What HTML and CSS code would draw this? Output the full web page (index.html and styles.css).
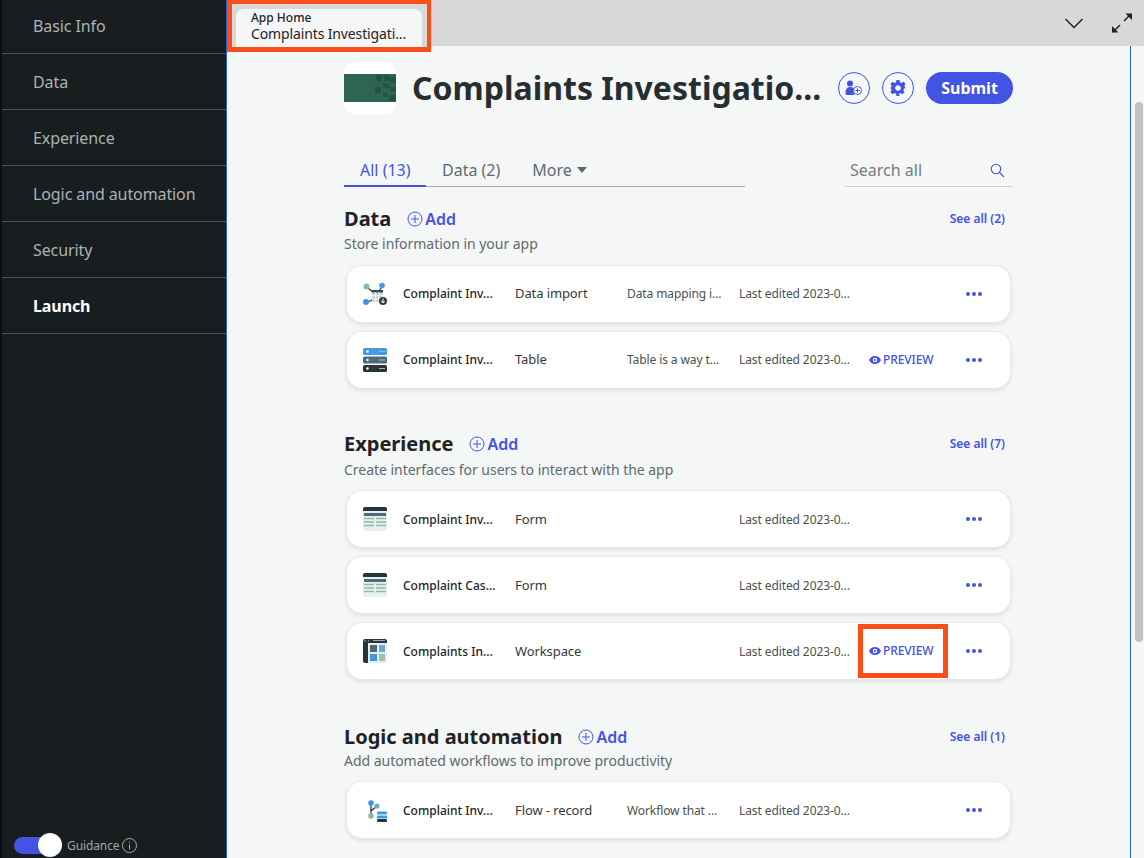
FILE: index.html
```html
<!DOCTYPE html>
<html lang="en">
<head>
<meta charset="utf-8">
<title>App Home</title>
<link rel="stylesheet" href="styles.css">
</head>
<body>
<div class="app">
  <nav class="side">
    <ul class="menu">
      <li class="menu-item">Basic Info</li>
      <li class="menu-item">Data</li>
      <li class="menu-item">Experience</li>
      <li class="menu-item">Logic and automation</li>
      <li class="menu-item">Security</li>
      <li class="menu-item active">Launch</li>
    </ul>
    <div class="guidance">
      <span class="toggle"><span class="knob"></span></span>
      <span class="guid-label">Guidance</span>
      <svg class="info" width="15" height="15" viewBox="0 0 15 15"><circle cx="7.500" cy="7.500" r="7" fill="none" stroke="#a9adad"/><path d="M7.500 6.500v5M7.500 3.800v1.300" stroke="#a9adad" fill="none"/></svg>
    </div>
  </nav>
  <div class="main">
    <header class="topbar">
      <div class="tab-mark">
        <div class="tab">
          <div class="tab-title">App Home</div>
          <div class="tab-sub">Complaints Investigati...</div>
        </div>
      </div>
      <div class="top-actions">
        <svg width="20" height="12" viewBox="0 0 20 12"><path d="M1.500 2l8.500 8.500L18.500 2" fill="none" stroke="#1d2326" stroke-width="1.500"/></svg>
        <svg width="22" height="22" viewBox="0 0 22 22"><path d="M13 9l7-7M2 20l7-7" stroke="#1d2326" stroke-width="1.500" fill="none"/><path d="M14.500 1.500h6.500v6.500zM1 14l6.500 6.500H1z" fill="#1d2326"/></svg>
      </div>
    </header>
    <div class="body">
      <main class="content">
        <div class="page-head">
          <div class="logo"><div class="logo-band"><svg width="21" height="28" viewBox="0 0 21 28"><path fill="#1f4f40" opacity=".7" d="M1 1h6v6H1zM9 1h6v6H9zM15 3h6v6h-6zM0 13h6v6H0zM8 9h6v5H8zM15 13h6v5h-6zM8 19h5v4H8zM14 21h7v6h-7z"/></svg></div></div>
          <h1 class="title">Complaints Investigatio...</h1>
          <button class="round-btn"><svg width="18" height="16" viewBox="0 0 18 16"><circle cx="5" cy="3.500" r="3" fill="#4353e5"/><path d="M0.500 14c0-4 1-7 4.500-7s4 2 4.500 3c-1 2-1 3 0 5H1.500z" fill="#4353e5"/><circle cx="12.500" cy="10.500" r="4" fill="#fff" stroke="#4353e5"/><path d="M12.500 8.300v4.400M10.300 10.500h4.400" stroke="#4353e5"/></svg></button>
          <button class="round-btn"><svg width="16" height="16" viewBox="0 0 16 16"><path fill="#4353e5" fill-rule="evenodd" d="M6.500 0h3l.5 2.200 1.500.7 2-1.100 2 2.200-1.100 2 .6 1.500L16 8l-2 .5-.6 1.500 1.100 2-2 2.200-2-1.100-1.500.7L9.500 16h-3l-.5-2.200-1.500-.7-2 1.100-2-2.200 1.100-2L1 8.500 0 8l1-.5.600-1.500-1.100-2 2-2.200 2 1.100 1.500-.7zM8 5.200a2.800 2.800 0 1 0 0 5.600 2.800 2.800 0 0 0 0-5.600z"/></svg></button>
          <button class="submit">Submit</button>
        </div>
        <div class="filters">
          <div class="tabs">
            <span class="ftab on">All (13)</span>
            <span class="ftab">Data (2)</span>
            <span class="ftab">More<span class="caret"></span></span>
          </div>
          <div class="search">
            <span>Search all</span>
            <svg width="15" height="15" viewBox="0 0 15 15"><circle cx="6" cy="6" r="4.700" fill="none" stroke="#4353e5" stroke-width="1.100"/><path d="M9.500 9.500l4.500 4.500" stroke="#4353e5" stroke-width="1.100"/></svg>
          </div>
        </div>

        <section class="sec sec-data">
          <div class="sec-head">
            <h2>Data</h2>
            <a class="add"><svg width="16" height="16" viewBox="0 0 16 16"><circle cx="8" cy="8" r="7" fill="none" stroke="#4353e5"/><path d="M8 4v8M4 8h8" stroke="#4353e5"/></svg>Add</a>
            <a class="see">See all (2)</a>
          </div>
          <p class="sub">Store information in your app</p>
          <div class="card">
            <svg class="ic" width="24" height="24" viewBox="0 0 24 24"><path d="M5 6l6 5M19 5l-4 5M5 20l6-3" stroke="#1f2d33" stroke-width="1.200"/><circle cx="3.500" cy="4.500" r="3" fill="#8eb8a4"/><circle cx="19" cy="3.500" r="2.800" fill="#4a9be0"/><circle cx="3" cy="20" r="3" fill="#3f97e3"/><rect x="9" y="8" width="11" height="12" fill="#ccd3d5"/><rect x="9" y="8" width="11" height="2.500" fill="#3b4a52"/><path d="M9 13.500h11M9 17h11M12.500 10v10M16 10v10" stroke="#fff" stroke-width=".7"/><circle cx="20" cy="19" r="4" fill="#2f3e46"/><path d="M20 16.500v4M18.200 19l1.800 2 1.800-2" stroke="#fff" fill="none"/></svg>
            <span class="name">Complaint Inv...</span><span class="type">Data import</span><span class="desc">Data mapping i...</span><span class="edited">Last edited 2023-0...</span>
            <span class="prev"></span><span class="dots"><i></i><i></i><i></i></span>
          </div>
          <div class="card">
            <svg class="ic" width="24" height="24" viewBox="0 0 24 24"><rect width="24" height="7" y="0" rx="1.500" fill="#459be0"/><rect width="24" height="7" y="8.500" rx="1.500" fill="#52697a"/><rect width="24" height="7" y="17" rx="1.500" fill="#27353b"/><circle cx="4.500" cy="3.500" r="1.200" fill="#fff"/><circle cx="4.500" cy="12" r="1.200" fill="#fff"/><circle cx="4.500" cy="20.500" r="1.200" fill="#fff"/><path d="M16 3.500h6M16 12h6M16 20.500h6" stroke="#9cc4ad"/></svg>
            <span class="name">Complaint Inv...</span><span class="type">Table</span><span class="desc">Table is a way t...</span><span class="edited">Last edited 2023-0...</span>
            <a class="prev"><svg width="12" height="8" viewBox="0 0 12 8"><path fill="#4353e5" fill-rule="evenodd" d="M6 0c2.600 0 4.800 1.600 6 4-1.200 2.400-3.400 4-6 4S1.200 6.400 0 4c1.200-2.400 3.400-4 6-4zm0 1.800a2.200 2.200 0 1 0 0 4.400 2.200 2.200 0 0 0 0-4.400zm0 1.100a1.100 1.100 0 1 1 0 2.200 1.100 1.100 0 0 1 0-2.200z"/></svg>PREVIEW</a><span class="dots"><i></i><i></i><i></i></span>
          </div>
        </section>

        <section class="sec sec-exp">
          <div class="sec-head">
            <h2>Experience</h2>
            <a class="add"><svg width="16" height="16" viewBox="0 0 16 16"><circle cx="8" cy="8" r="7" fill="none" stroke="#4353e5"/><path d="M8 4v8M4 8h8" stroke="#4353e5"/></svg>Add</a>
            <a class="see">See all (7)</a>
          </div>
          <p class="sub">Create interfaces for users to interact with the app</p>
          <div class="card">
            <svg class="ic" width="24" height="24" viewBox="0 0 24 24"><rect width="24" height="24" rx="2" fill="#e8eff0"/><path d="M0 4V2a2 2 0 0 1 2-2h20a2 2 0 0 1 2 2v2z" fill="#27353b"/><rect y="6" x="1" width="22" height="3" fill="#52697a"/><path d="M1 11.500h10M13 11.500h10M1 15h10M13 15h10M1 18.500h10M13 18.500h10" stroke="#8fbba2" stroke-width="1.300"/></svg>
            <span class="name">Complaint Inv...</span><span class="type">Form</span><span class="desc"></span><span class="edited">Last edited 2023-0...</span>
            <span class="prev"></span><span class="dots"><i></i><i></i><i></i></span>
          </div>
          <div class="card">
            <svg class="ic" width="24" height="24" viewBox="0 0 24 24"><rect width="24" height="24" rx="2" fill="#e8eff0"/><path d="M0 4V2a2 2 0 0 1 2-2h20a2 2 0 0 1 2 2v2z" fill="#27353b"/><rect y="6" x="1" width="22" height="3" fill="#52697a"/><path d="M1 11.500h10M13 11.500h10M1 15h10M13 15h10M1 18.500h10M13 18.500h10" stroke="#8fbba2" stroke-width="1.300"/></svg>
            <span class="name">Complaint Cas...</span><span class="type">Form</span><span class="desc"></span><span class="edited">Last edited 2023-0...</span>
            <span class="prev"></span><span class="dots"><i></i><i></i><i></i></span>
          </div>
          <div class="card">
            <svg class="ic" width="24" height="24" viewBox="0 0 24 24"><rect width="24" height="24" rx="2" fill="#e8eff0"/><path d="M0 4V2a2 2 0 0 1 2-2h20a2 2 0 0 1 2 2v2z" fill="#27353b"/><path d="M0 4h5v20H2a2 2 0 0 1-2-2z" fill="#27353b"/><path d="M10 1.500h12" stroke="#9aa5aa"/><circle cx="2" cy="2" r=".8" fill="#9aa5aa"/><circle cx="5.500" cy="2" r=".8" fill="#9aa5aa"/><rect x="7" y="6" width="7" height="7" fill="#52697a"/><rect x="16" y="6" width="6" height="7" fill="#6da6d8"/><rect x="7" y="15" width="7" height="7" fill="#3f97e3"/><rect x="16" y="15" width="6" height="7" fill="#9cc4ad"/></svg>
            <span class="name">Complaints In...</span><span class="type">Workspace</span><span class="desc"></span><span class="edited">Last edited 2023-0...</span>
            <a class="prev"><svg width="12" height="8" viewBox="0 0 12 8"><path fill="#4353e5" fill-rule="evenodd" d="M6 0c2.600 0 4.800 1.600 6 4-1.200 2.400-3.400 4-6 4S1.200 6.400 0 4c1.200-2.400 3.400-4 6-4zm0 1.800a2.200 2.200 0 1 0 0 4.400 2.200 2.200 0 0 0 0-4.400zm0 1.100a1.100 1.100 0 1 1 0 2.200 1.100 1.100 0 0 1 0-2.200z"/></svg>PREVIEW</a><span class="dots"><i></i><i></i><i></i></span>
            <span class="mark-preview"></span>
          </div>
        </section>

        <section class="sec sec-logic">
          <div class="sec-head">
            <h2>Logic and automation</h2>
            <a class="add"><svg width="16" height="16" viewBox="0 0 16 16"><circle cx="8" cy="8" r="7" fill="none" stroke="#4353e5"/><path d="M8 4v8M4 8h8" stroke="#4353e5"/></svg>Add</a>
            <a class="see">See all (1)</a>
          </div>
          <p class="sub">Add automated workflows to improve productivity</p>
          <div class="card">
            <svg class="ic" width="24" height="24" viewBox="0 0 24 24"><path d="M8 5v13M8 13l6-5" stroke="#27353b" stroke-width="1.300"/><circle cx="8" cy="5" r="2.800" fill="#3f97e3"/><circle cx="14" cy="8" r="2.600" fill="#6da6d8"/><circle cx="8" cy="18" r="2.800" fill="#8eb8a4"/><rect x="14" y="13.500" width="10" height="3" rx="1" fill="#3f97e3"/><rect x="14" y="17.500" width="10" height="3" rx="1" fill="#3f97e3"/><rect x="14" y="21" width="10" height="3" rx="1" fill="#27353b"/></svg>
            <span class="name">Complaint Inv...</span><span class="type">Flow - record</span><span class="desc">Workflow that ...</span><span class="edited">Last edited 2023-0...</span>
            <span class="prev"></span><span class="dots"><i></i><i></i><i></i></span>
          </div>
        </section>
      </main>
      <div class="scroll"><div class="thumb"></div></div>
    </div>
  </div>
</div>
</body>
</html>
```
FILE: styles.css
```css
* { box-sizing: border-box; }
html, body { margin: 0; height: 100%; overflow: hidden; }
body { font-family: "Noto Sans", "Open Sans", sans-serif; color: #1d2326; background: #f5f7f7; }
.app { display: flex; height: 858px; width: 1144px; }

.side { width: 227px; flex: none; background: #181d1f; border-left: 2px solid #0b0d0e; border-right: 1px solid #2a62d9; display: flex; flex-direction: column; justify-content: space-between; }
.menu { list-style: none; margin: 0; padding: 0; }
.menu-item { height: 56px; padding: 0 0 0 31px; display: flex; align-items: center; font-size: 16px; letter-spacing: -.1px; color: #aeb2b2; border-bottom: 1px solid #4a4f50; }
.menu-item:first-child { height: 54px; padding-bottom: 2px; }
.menu-item.active { color: #fff; font-weight: 700; }
.guidance { display: flex; align-items: center; padding: 0 0 0 12px; height: 26px; }
.toggle { position: relative; width: 48px; height: 17px; border-radius: 9px; background: #4353e5; display: block; }
.knob { position: absolute; right: 0; top: -4px; width: 24px; height: 24px; border-radius: 50%; background: #fff; }
.guid-label { margin-left: 5px; font-size: 12px; letter-spacing: -.1px; color: #a2a6a6; }
.info { margin-left: 2px; }

.main { flex: 1; min-width: 0; display: flex; flex-direction: column; }
.topbar { height: 46px; flex: none; background: #d8d8d8; display: flex; justify-content: space-between; align-items: center; position: relative; }
.tab-mark { position: absolute; left: 0; top: 0; width: 204px; height: 52px; padding: 5px 0 0 4px; border: 4px solid #f94e17; border-left-width: 5px; border-bottom-width: 5px; z-index: 3; background: #d8d8d8; }
.tab { width: 186px; height: 38px; background: #f5f7f7; border-radius: 8px 8px 0 0; padding: 1px 0 0 15px; line-height: 16px; }
.tab-title { font-size: 12px; font-weight: 500; color: #1d2326; }
.tab-sub { font-size: 14px; letter-spacing: -.13px; color: #1d2326; line-height: 16px; }
.top-actions { margin-left: auto; display: flex; align-items: center; gap: 27px; padding-right: 11px; }

.body { flex: 1; min-height: 0; display: flex; }
.content { width: 903px; flex: none; padding: 16px 0 0 117px; overflow: hidden; }
.scroll { flex: 1; border-left: 1px solid #2a62d9; padding: 56px 0 0 4px; background: #f5f7f7; }
.thumb { width: 8px; height: 540px; background: #c2c2c2; border-radius: 4px; }

.page-head { display: flex; align-items: center; height: 52px; width: 669px; }
.logo { width: 52px; height: 52px; background: #fff; border-radius: 10px; overflow: hidden; padding-top: 12px; flex: none; }
.logo-band { height: 28px; background: #2e6451; display: flex; justify-content: flex-end; }
.title { font-size: 32px; font-weight: 700; margin: 0 0 0 16px; color: #272e31; width: 426px; white-space: nowrap; line-height: 52px; flex: none; }
.round-btn { width: 32px; height: 32px; border-radius: 50%; border: 1px solid #4353e5; background: transparent; padding: 0; display: flex; align-items: center; justify-content: center; margin-right: 12px; flex: none; }
.submit { width: 87px; height: 32px; border-radius: 16px; border: 0; background: #4353e5; color: #fff; font: 700 16px "Noto Sans", sans-serif; padding: 0; }

.filters { display: flex; justify-content: space-between; align-items: flex-end; width: 669px; margin-top: 41px; height: 32px; }
.tabs { display: flex; width: 401px; height: 32px; border-bottom: 1px solid #a7abab; }
.ftab { font-size: 16px; color: #5d6a6e; padding: 3px 16px 0; height: 32px; line-height: 24px; white-space: nowrap; }
.ftab.on { color: #4353e5; border-bottom: 2px solid #4353e5; width: 82px; }
.caret { display: inline-block; margin-left: 5px; border: 5px solid transparent; border-top: 6px solid #5d6a6e; border-bottom: 0; vertical-align: 3px; }
.search { width: 168px; height: 32px; border-bottom: 1px solid #d2d4d4; display: flex; justify-content: space-between; align-items: center; padding: 0 8px 1px 5px; font-size: 16px; color: #777c7e; }

.sec { width: 669px; }
.sec-data { margin-top: 18px; }
.sec-exp { margin-top: 41px; }
.sec-logic { margin-top: 43px; }
.sec-head { display: flex; align-items: center; height: 28px; }
h2 { font-size: 20px; font-weight: 700; margin: 0; color: #1d2326; line-height: 28px; }
.add { display: flex; align-items: center; margin-left: 16px; font-size: 16px; font-weight: 600; color: #4353e5; gap: 2px; }
.see { margin: 0 8px 2px auto; font-size: 12px; font-weight: 600; color: #4353e5; }
.sub { margin: 1px 0 11px; font-size: 14px; letter-spacing: -.03px; line-height: 20px; color: #5d6a6e; height: 20px; }
.sec-exp .sub { margin: 2px 0 10px; }
.sec-logic .sub { margin: 0 0 10px; }

.card { position: relative; display: flex; align-items: center; width: 665px; height: 58px; margin: 0 0 8px 2px; padding-left: 16px; background: #fff; border: 1px solid #e6e8e8; border-top-color: #e9ebeb; border-radius: 16px; box-shadow: 0 2px 4px rgba(0,0,0,.09); font-size: 13px; }
.ic { flex: none; margin-right: 16px; }
.name { width: 112px; font-size: 12px; font-weight: 500; white-space: nowrap; color: #1d2326; }
.type { width: 112px; font-size: 13px; letter-spacing: -.1px; color: #33393b; white-space: nowrap; }
.desc { width: 112px; font-size: 12px; letter-spacing: -.1px; color: #4a5053; white-space: nowrap; }
.edited { width: 130px; font-size: 12px; letter-spacing: -.1px; color: #4a5053; white-space: nowrap; }
.sec-data .name, .sec-data .type, .sec-data .desc, .sec-data .edited { margin-bottom: 2px; }
.prev { width: 97px; display: flex; align-items: center; gap: 2px; font-size: 12px; font-weight: 500; letter-spacing: -.1px; color: #4353e5; margin-top: -1px; }
.dots { display: flex; gap: 2px; }
.dots i { width: 4px; height: 4px; border-radius: 50%; background: #4353e5; display: block; }
.mark-preview { position: absolute; left: 511px; top: 1px; width: 90px; height: 54px; border: 5px solid #f94e17; }
```
